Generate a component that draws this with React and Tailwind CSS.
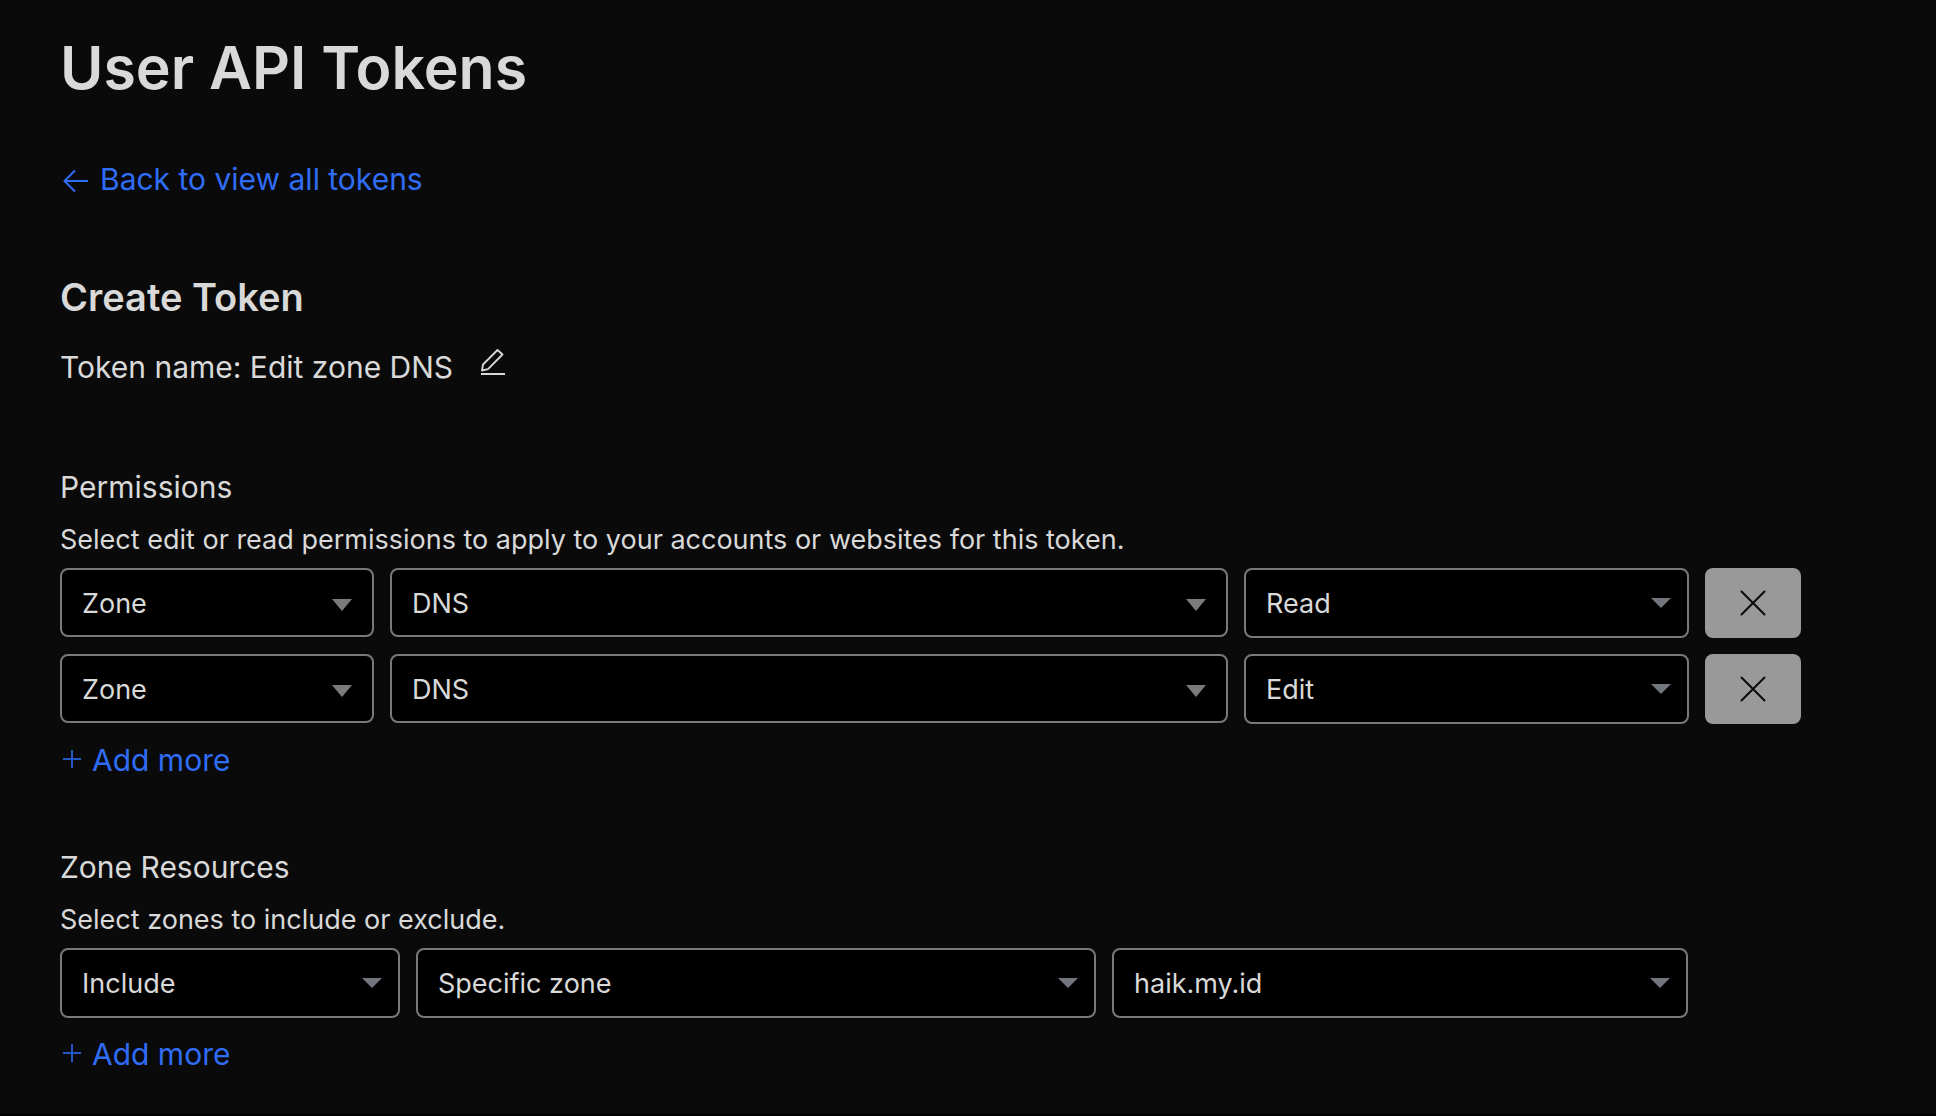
import { useState } from "react";

function Caret({ compact }) {
  return compact ? (
    <svg
      className="pointer-events-none absolute top-1/2 right-[18px] -mt-[5px] h-[10px] w-5"
      viewBox="0 0 20 10"
      aria-hidden="true"
    >
      <path d="M0 0H20L10 10Z" fill="#72777d" />
    </svg>
  ) : (
    <svg
      className="pointer-events-none absolute top-1/2 right-[22px] -mt-1 h-3 w-5"
      viewBox="0 0 20 12"
      aria-hidden="true"
    >
      <path d="M0 0H20L10 12Z" fill="#7b7b7b" />
    </svg>
  );
}

function Select({ label, value, options, compact }) {
  const [current, setCurrent] = useState(value);
  return (
    <div className="relative">
      <select
        aria-label={label}
        value={current}
        onChange={(e) => setCurrent(e.target.value)}
        className={
          "block w-full appearance-none rounded-lg border-2 border-[#797979] bg-black pt-0.5 pr-12 pl-5 text-[27px] leading-9 text-[#d9d9d9] " +
          (compact ? "h-[70px]" : "h-[69px]")
        }
      >
        {options.map((o) => (
          <option key={o}>{o}</option>
        ))}
      </select>
      <Caret compact={compact} />
    </div>
  );
}

function RemoveButton() {
  return (
    <button
      type="button"
      aria-label="Remove permission"
      className="flex h-[70px] items-center justify-center rounded-lg bg-[#999999]"
    >
      <svg className="size-[26px]" viewBox="0 0 26 26" fill="none" stroke="#0a0a0a" strokeWidth="2" strokeLinecap="round" aria-hidden="true">
        <path d="M1.5 1.5L24.5 24.5M24.5 1.5L1.5 24.5" />
      </svg>
    </button>
  );
}

function AddMore() {
  return (
    <button type="button" className="mt-4 flex items-center gap-[11px] pl-[3px] text-[30px] leading-10 text-[#2f6df6]">
      <svg className="mb-0.5 size-[18px]" viewBox="0 0 18 18" fill="none" stroke="#2558c4" strokeWidth="2" aria-hidden="true">
        <path d="M9 0V18M0 9H18" />
      </svg>
      Add more
    </button>
  );
}

function Section({ title, description, children }) {
  return (
    <section>
      <h3 className="text-[30px] leading-10">{title}</h3>
      <p className="mt-[15px] text-[27px] leading-9">{description}</p>
      <div className="mt-[10px] flex flex-col gap-4">{children}</div>
      <AddMore />
    </section>
  );
}

const permissions = [
  { id: 1, scope: "Zone", resource: "DNS", access: "Read" },
  { id: 2, scope: "Zone", resource: "DNS", access: "Edit" },
];

export default function App() {
  return (
    <main className="min-h-screen border-b-2 border-black bg-[#0a0a0a] pt-7 pr-[135px] pl-[60px] font-['Inter',sans-serif] text-[#d9d9d9]">
      <h1 className="text-[59px] leading-[80px] font-semibold">User API Tokens</h1>

      <a href="#tokens" className="mt-[51px] flex w-fit items-center gap-3 pl-[3px] text-[30px] leading-10 text-[#2f6df6]">
        <svg className="mt-1 h-[22px] w-[25px]" viewBox="0 0 25 22" fill="none" stroke="currentColor" strokeWidth="2" aria-hidden="true">
          <path d="M25 11H1.5M12 0.5L1.5 11L12 21.5" />
        </svg>
        Back to view all tokens
      </a>

      <h2 className="mt-[74px] text-[38px] leading-[48px] font-semibold">Create Token</h2>
      <div className="mt-[26px] mb-20 flex items-center gap-7">
        <p className="text-[30px] leading-10">Token name: Edit zone DNS</p>
        <button type="button" aria-label="Edit token name" className="mb-[10px]">
          <svg className="h-[26px] w-6" viewBox="0 0 24 26" fill="none" stroke="#d9d9d9" aria-hidden="true">
            <path d="M1 21.5L2 15.5L16.5 1L21.5 5.5L7 20.2L1 21.5Z" strokeWidth="1.8" strokeLinejoin="round" />
            <path d="M0 25H24" strokeWidth="2" />
          </svg>
        </button>
      </div>

      <form className="flex flex-col gap-[67px]" onSubmit={(e) => e.preventDefault()}>
        <Section
          title="Permissions"
          description="Select edit or read permissions to apply to your accounts or websites for this token."
        >
          {permissions.map((p) => (
            <div key={p.id} className="grid grid-cols-[314fr_838fr_445fr_96px] gap-4">
              <Select label="Permission scope" value={p.scope} options={["Account", "User", "Zone"]} />
              <Select label="Permission resource" value={p.resource} options={["DNS", "Firewall Services", "Zone Settings"]} />
              <Select label="Access level" value={p.access} options={["Read", "Edit"]} compact />
              <RemoveButton />
            </div>
          ))}
        </Section>

        <Section title="Zone Resources" description="Select zones to include or exclude.">
          <div className="mr-[113px] grid grid-cols-[340fr_680fr_576fr] gap-4">
            <Select label="Zone rule" value="Include" options={["Include", "Exclude"]} compact />
            <Select label="Zone selection" value="Specific zone" options={["All zones", "Specific zone"]} compact />
            <Select label="Zone" value="haik.my.id" options={["haik.my.id"]} compact />
          </div>
        </Section>
      </form>
    </main>
  );
}
